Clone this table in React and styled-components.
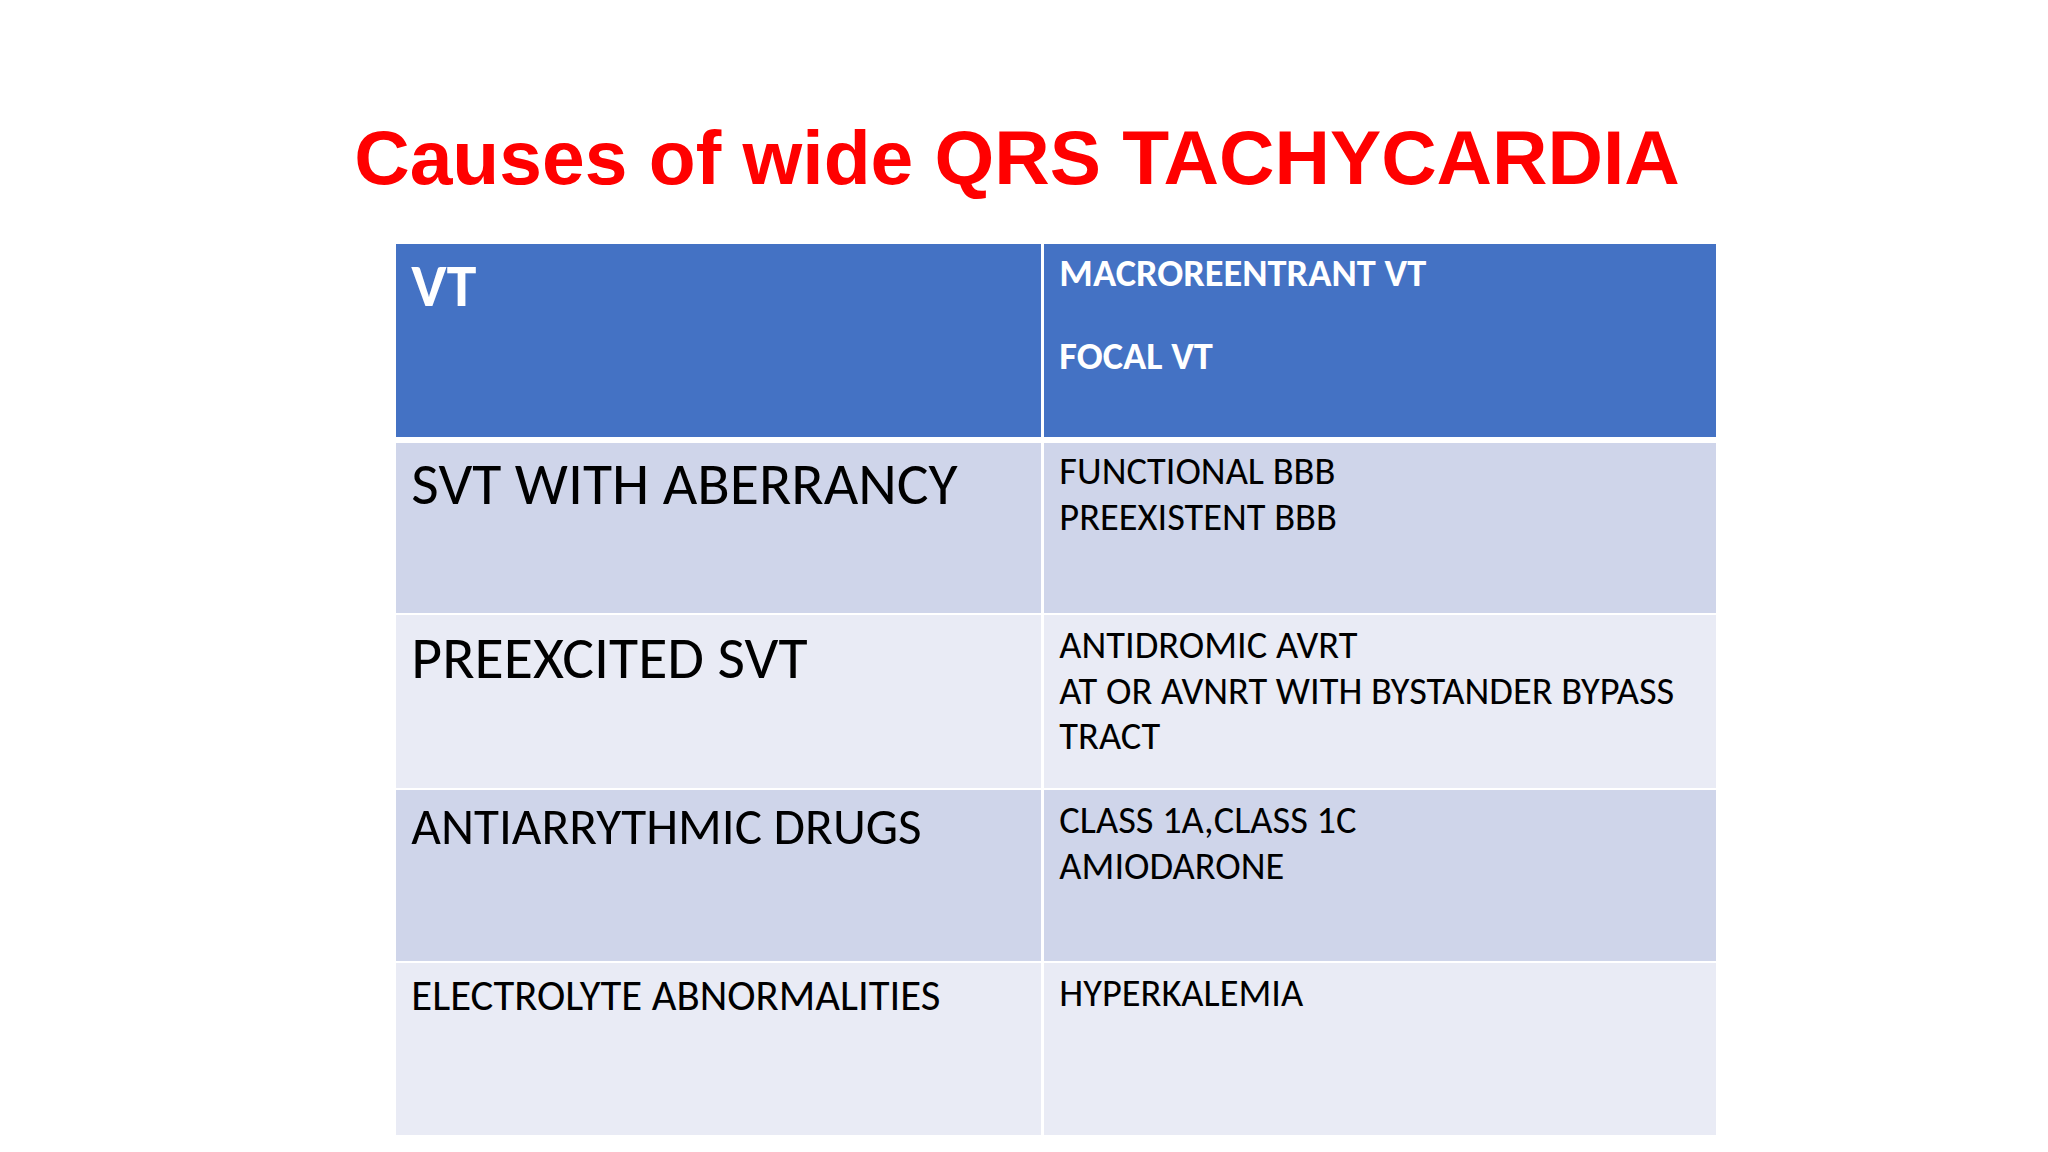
import React from 'react';
import styled, { createGlobalStyle } from 'styled-components';

const Global = createGlobalStyle`
  html, body { margin: 0; padding: 0; background: #ffffff; }
  body { width: 2048px; height: 1152px; overflow: hidden; }
`;

const Slide = styled.div`
  width: 2048px;
  height: 1152px;
  box-sizing: border-box;
  padding-top: 113px;
  background: #ffffff;
  display: flex;
  flex-direction: column;
`;

const Title = styled.h1`
  margin: 0;
  padding-right: 14px;
  font-family: "Liberation Sans", Arial, sans-serif;
  font-weight: 700;
  font-size: 76.8px;
  line-height: 88px;
  color: #ff0000;
  text-align: center;
  white-space: nowrap;
`;

const Table = styled.div`
  margin: 43px 0 0 396px;
  width: 1320px;
  display: flex;
  flex-direction: column;
  gap: 2px;
`;

const Row = styled.div`
  display: grid;
  grid-template-columns: 645px 672px;
  column-gap: 3px;
  height: ${(p) => p.$h}px;
  margin-bottom: ${(p) => (p.$header ? 4 : 0)}px;
`;

const tones = {
  header: '#4472c4',
  dark: '#cfd5ea',
  light: '#e9ebf5',
};

const Cell = styled.div`
  box-sizing: border-box;
  padding: ${(p) => p.$top}px 15.36px 0;
  background: ${(p) => tones[p.$tone]};
  color: ${(p) => (p.$tone === 'header' ? '#ffffff' : '#000000')};
  font-family: Carlito, Calibri, Lato, "Open Sans", sans-serif;
  overflow: hidden;
`;

const Line = styled.div`
  font-size: ${(p) => p.$size}px;
  font-weight: ${(p) => (p.$bold ? 700 : 400)};
  line-height: 1.19;
  white-space: nowrap;
`;

const Spacer = styled.div`
  height: ${(p) => p.$h}px;
`;

const rows = [
  {
    tone: 'dark',
    h: 170,
    top: 5,
    left: { text: 'SVT WITH ABERRANCY', size: 59.7 },
    right: ['FUNCTIONAL BBB', 'PREEXISTENT BBB'],
  },
  {
    tone: 'light',
    h: 173,
    top: 7,
    left: { text: 'PREEXCITED SVT', size: 59.7 },
    right: ['ANTIDROMIC AVRT', 'AT OR AVNRT WITH BYSTANDER BYPASS', 'TRACT'],
  },
  {
    tone: 'dark',
    h: 171,
    top: 7,
    left: { text: 'ANTIARRYTHMIC DRUGS', size: 51.2 },
    right: ['CLASS 1A,CLASS 1C', 'AMIODARONE'],
  },
  {
    tone: 'light',
    h: 172,
    top: 7,
    left: { text: 'ELECTROLYTE ABNORMALITIES', size: 42.7 },
    right: ['HYPERKALEMIA'],
  },
];

export default function App() {
  return (
    <>
      <Global />
      <Slide>
        <Title>Causes of wide QRS TACHYCARDIA</Title>
        <Table>
          <Row $h={193} $header>
            <Cell $tone="header" $top={6}>
              <Line $size={59.7} $bold>VT</Line>
            </Cell>
            <Cell $tone="header" $top={6}>
              <Line $size={38.4} $bold>MACROREENTRANT VT</Line>
              <Spacer $h={37} />
              <Line $size={38.4} $bold>FOCAL VT</Line>
            </Cell>
          </Row>
          {rows.map((r, i) => (
            <Row key={i} $h={r.h}>
              <Cell $tone={r.tone} $top={r.top}>
                <Line $size={r.left.size}>{r.left.text}</Line>
              </Cell>
              <Cell $tone={r.tone} $top={r.top}>
                {r.right.map((t, j) => (
                  <Line key={j} $size={38.4}>{t}</Line>
                ))}
              </Cell>
            </Row>
          ))}
        </Table>
      </Slide>
    </>
  );
}
